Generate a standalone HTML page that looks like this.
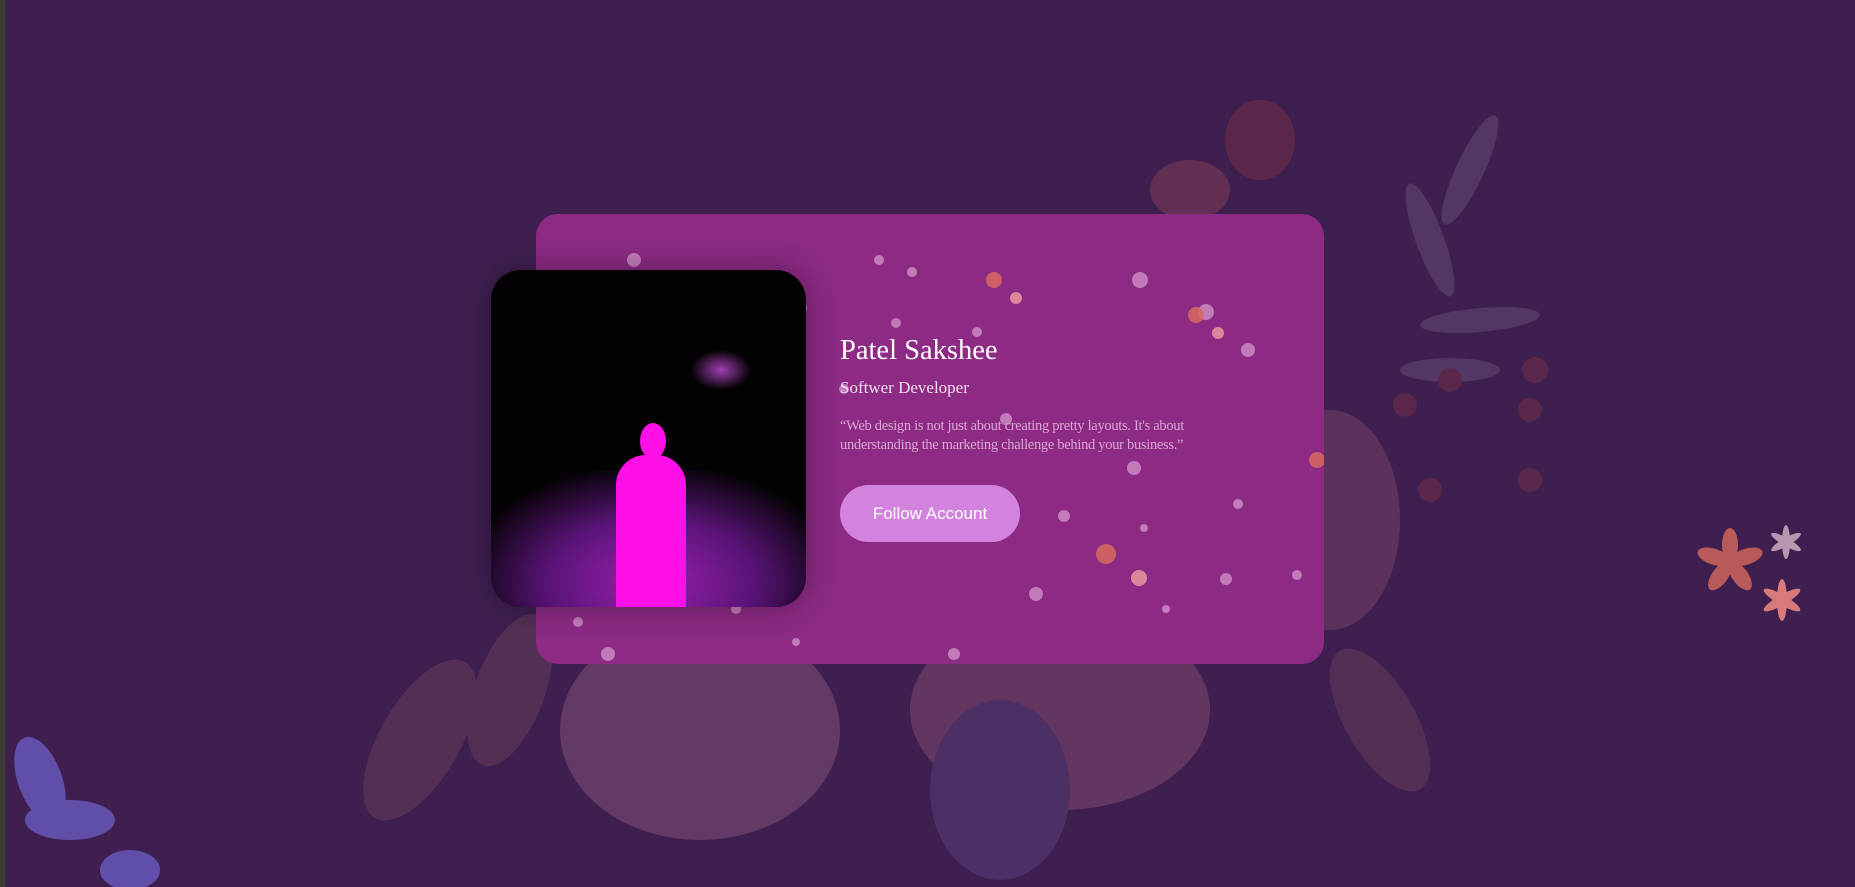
<!DOCTYPE html>
<html><head><meta charset="utf-8"><style>
html,body{margin:0;padding:0;width:1855px;height:887px;overflow:hidden;background:#3f1f50;font-family:"Liberation Serif",serif}
.abs{position:absolute}
.card{left:536px;top:214px;width:788px;height:450px;border-radius:22px;background:#8c2a84;overflow:hidden}
.photo{left:491px;top:270px;width:315px;height:337px;border-radius:30px;overflow:hidden;background:#050205;box-shadow:0 0 30px rgba(0,0,0,.35)}
.name{left:840px;top:335px;color:#fff;font-size:28.5px}
.sub{left:840px;top:378px;color:#f3dff0;font-size:17px}
.quote{left:840px;top:417px;color:#d9a6d4;font-size:14.5px;line-height:19px;white-space:nowrap;letter-spacing:-0.3px}
.btn{left:840px;top:485px;width:180px;height:57px;border-radius:29px;background:#d383de;color:#fff;font-family:"Liberation Sans",sans-serif;font-size:17px;text-align:center;line-height:57px}
</style></head><body>
<div class="abs" style="left:0;top:0;width:5px;height:887px;background:#3c3c34"></div>
<svg class="abs" style="left:0;top:0" width="1855" height="887">
<g opacity=".22">
<ellipse cx="700" cy="730" rx="140" ry="110" fill="#e29ab0"/>
<ellipse cx="1060" cy="710" rx="150" ry="100" fill="#e58aa6"/>
<ellipse cx="1330" cy="520" rx="70" ry="110" fill="#c4788f"/>
<ellipse cx="1000" cy="790" rx="70" ry="90" fill="#7a70b0"/>
<ellipse cx="420" cy="740" rx="40" ry="90" fill="#a06a6a" transform="rotate(30 420 740)"/>
<ellipse cx="510" cy="690" rx="35" ry="80" fill="#a06a6a" transform="rotate(20 510 690)"/>
<ellipse cx="1380" cy="720" rx="35" ry="80" fill="#a06a6a" transform="rotate(-30 1380 720)"/>
<ellipse cx="1190" cy="190" rx="40" ry="30" fill="#e06a60"/>
<ellipse cx="1260" cy="140" rx="35" ry="40" fill="#c04a40"/>
<ellipse cx="1470" cy="170" rx="14" ry="60" fill="#9a8aa8" transform="rotate(25 1470 170)"/>
<ellipse cx="1430" cy="240" rx="14" ry="60" fill="#9a8aa8" transform="rotate(-20 1430 240)"/>
<ellipse cx="1480" cy="320" rx="60" ry="12" fill="#9a8aa8" transform="rotate(-5 1480 320)"/>
<ellipse cx="1450" cy="370" rx="50" ry="12" fill="#9a8aa8"/>
<circle cx="1405" cy="405" r="12" fill="#c04a40"/><circle cx="1450" cy="380" r="12" fill="#c04a40"/>
<circle cx="1535" cy="370" r="13" fill="#c04a40"/><circle cx="1530" cy="410" r="12" fill="#c04a40"/>
<circle cx="1430" cy="490" r="12" fill="#c04a40"/><circle cx="1530" cy="480" r="12" fill="#c04a40"/>
</g>
<g fill="#6a5ac0" opacity=".8">
<ellipse cx="40" cy="780" rx="22" ry="45" transform="rotate(-20 40 780)"/>
<ellipse cx="70" cy="820" rx="45" ry="20"/>
<ellipse cx="130" cy="870" rx="30" ry="20"/>
</g>
<g fill="#b85a58">
<ellipse cx="1730" cy="545" rx="8" ry="17" transform="rotate(0 1730 562)"/>
<ellipse cx="1730" cy="545" rx="8" ry="17" transform="rotate(72 1730 562)"/>
<ellipse cx="1730" cy="545" rx="8" ry="17" transform="rotate(144 1730 562)"/>
<ellipse cx="1730" cy="545" rx="8" ry="17" transform="rotate(216 1730 562)"/>
<ellipse cx="1730" cy="545" rx="8" ry="17" transform="rotate(288 1730 562)"/>
</g>
<g fill="#b896b0"><ellipse cx="1786" cy="542" rx="4" ry="17"/><ellipse cx="1786" cy="542" rx="4" ry="17" transform="rotate(60 1786 542)"/><ellipse cx="1786" cy="542" rx="4" ry="17" transform="rotate(120 1786 542)"/></g>
<g fill="#d87a78"><ellipse cx="1782" cy="600" rx="5" ry="21"/><ellipse cx="1782" cy="600" rx="5" ry="21" transform="rotate(60 1782 600)"/><ellipse cx="1782" cy="600" rx="5" ry="21" transform="rotate(120 1782 600)"/></g>
</svg>
<div class="abs card">
<svg width="788" height="450" style="position:absolute;left:0;top:0">
<g fill="#e6b0dc" opacity=".6">
<circle cx="98" cy="46" r="7"/><circle cx="343" cy="46" r="5"/><circle cx="376" cy="58" r="5"/><circle cx="604" cy="66" r="8"/><circle cx="670" cy="98" r="8"/>
<circle cx="265" cy="94" r="6"/><circle cx="360" cy="109" r="5"/><circle cx="441" cy="118" r="5"/><circle cx="712" cy="136" r="7"/>
<circle cx="308" cy="175" r="5"/><circle cx="470" cy="205" r="6"/><circle cx="598" cy="254" r="7"/><circle cx="702" cy="290" r="5"/>
<circle cx="528" cy="302" r="6"/><circle cx="608" cy="314" r="4"/><circle cx="690" cy="365" r="6"/><circle cx="500" cy="380" r="7"/>
<circle cx="200" cy="395" r="5"/><circle cx="72" cy="440" r="7"/><circle cx="418" cy="440" r="6"/><circle cx="761" cy="361" r="5"/><circle cx="630" cy="395" r="4"/>
<circle cx="42" cy="408" r="5"/><circle cx="168" cy="383" r="4"/><circle cx="260" cy="428" r="4"/>
</g>
<g fill="#d86a5e" opacity=".85"><circle cx="458" cy="66" r="8"/><circle cx="660" cy="101" r="8"/><circle cx="781" cy="246" r="8"/><circle cx="570" cy="340" r="10"/></g>
<g fill="#e898a0" opacity=".85"><circle cx="480" cy="84" r="6"/><circle cx="682" cy="119" r="6"/><circle cx="603" cy="364" r="8"/></g>
</svg>
</div>
<div class="abs photo">
<div class="abs" style="left:-20px;top:200px;width:360px;height:160px;background:radial-gradient(ellipse at 50% 70%,#9b20b0 0%,#5a1478 40%,rgba(0,0,0,0) 75%)"></div>
<div class="abs" style="left:200px;top:80px;width:60px;height:40px;border-radius:50%;background:radial-gradient(#a040b0,rgba(0,0,0,0) 70%)"></div>
<div class="abs" style="left:149px;top:153px;width:26px;height:36px;border-radius:50%;background:#ff10e8"></div>
<div class="abs" style="left:125px;top:185px;width:70px;height:160px;border-radius:30px 30px 10px 10px;background:#ff10e8"></div>
</div>
<div class="abs name">Patel Sakshee</div>
<div class="abs sub">Softwer Developer</div>
<div class="abs quote">“Web design is not just about creating pretty layouts. It's about<br>understanding the marketing challenge behind your business.”</div>
<div class="abs btn">Follow Account</div>
</body></html>
